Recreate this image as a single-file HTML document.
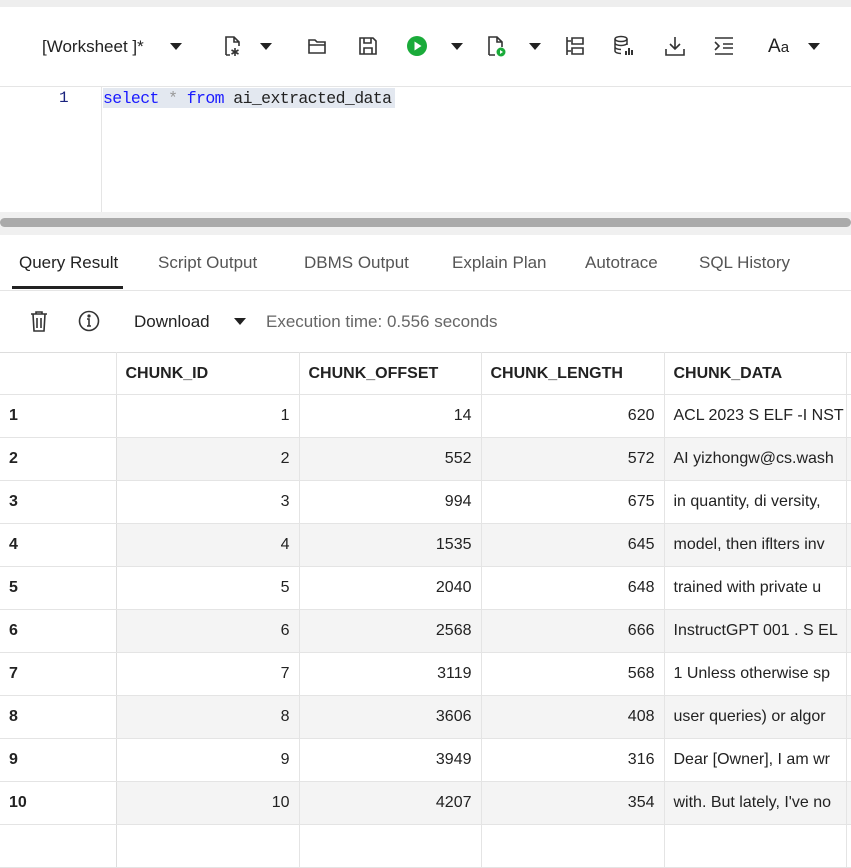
<!DOCTYPE html><html><head><style>
body{margin:0;width:851px;height:833px;overflow:hidden;font-family:"Liberation Sans",sans-serif;background:#fff;position:relative}
.a{position:absolute}
.ic{position:absolute;top:35px;width:22px;height:22px}
.tri{position:absolute;width:0;height:0;border-left:6px solid transparent;border-right:6px solid transparent;border-top:7px solid #222}
table{position:absolute;left:0;top:352px;border-collapse:collapse;font-size:16px;color:#222;table-layout:fixed;width:866px}
td,th{height:43px;padding:0 9px;border-right:1px solid #e4e4e4;border-bottom:1px solid #e4e4e4;box-sizing:border-box;white-space:nowrap;overflow:hidden}
th{text-align:left;font-weight:bold;border-top:1px solid #ddd;height:42px}
td.n{text-align:right}
tr.g td:not(:first-child){background:#f4f4f4}
td:first-child{font-weight:bold;border-right:1px solid #ddd}
</style></head><body>
<div class="a" style="left:0;top:0;width:851px;height:7px;background:#eee"></div>
<div class="a" style="left:0;top:86px;width:851px;height:1px;background:#e5e5e5"></div>
<div class="a" style="left:42px;top:37px;font-size:17px;color:#222">[Worksheet ]*</div>
<div class="tri" style="left:170px;top:43px"></div>
<svg class="ic" style="left:222px" viewBox="0 0 22 22" fill="none" stroke="#333" stroke-width="1.6"><path d="M4 20V2h8l5 5v4M12 2v5h5M4 20h4"/><path d="M13 13v8M9.5 15l7 4M16.5 15l-7 4"/></svg>
<div class="tri" style="left:260px;top:43px"></div>
<svg class="ic" style="left:307px" viewBox="0 0 22 22" fill="none" stroke="#333" stroke-width="1.6"><path d="M2 18V5h6l2 2h8v11zM2 10h16"/></svg>
<svg class="ic" style="left:357px" viewBox="0 0 22 22" fill="none" stroke="#333" stroke-width="1.6"><path d="M3 3h13l3 3v13H3zM7 3v5h7V3M7 19v-6h8v6"/></svg>
<svg class="ic" style="left:406px" viewBox="0 0 22 22"><circle cx="11" cy="11" r="10" fill="#1aab3a"/><path d="M8.5 6.5v9l7-4.5z" fill="#fff"/></svg>
<div class="tri" style="left:451px;top:43px"></div>
<svg class="ic" style="left:486px" viewBox="0 0 22 22" fill="none" stroke="#333" stroke-width="1.6"><path d="M3 20V2h8l5 5v5M11 2v5h5M3 20h6"/><circle cx="15" cy="17" r="4.5" fill="#1aab3a" stroke="none"/><path d="M14 15v4l3-2z" fill="#fff" stroke="none"/></svg>
<div class="tri" style="left:529px;top:43px"></div>
<svg class="ic" style="left:564px" viewBox="0 0 22 22" fill="none" stroke="#333" stroke-width="1.6"><path d="M3 2v18M3 6h4M3 16h4M8 3h11v6H8zM8 13h11v6H8z"/></svg>
<svg class="ic" style="left:613px" viewBox="0 0 22 22" fill="none" stroke="#333" stroke-width="1.5"><ellipse cx="8" cy="4" rx="6" ry="2.5"/><path d="M2 4v12c0 1.5 3 2.5 6 2.5M14 4v6M2 8c0 1.5 3 2.5 6 2.5s6-1 6-2.5M2 12c0 1.5 3 2.5 6 2.5"/><path d="M13 20v-4M16 20v-7M19 20v-5" stroke-width="2"/></svg>
<svg class="ic" style="left:664px" viewBox="0 0 22 22" fill="none" stroke="#333" stroke-width="1.6"><path d="M11 2v12M6 9l5 5 5-5M2 14v6h18v-6"/></svg>
<svg class="ic" style="left:713px" viewBox="0 0 22 22" fill="none" stroke="#333" stroke-width="1.6"><path d="M2 3h18M2 19h18M10 9h10M10 13h10M2 7l4 4-4 4"/></svg>
<div class="a" style="left:768px;top:36px;font-size:19px;color:#222">A<span style="font-size:15px">a</span></div>
<div class="tri" style="left:808px;top:43px"></div>
<div class="a" style="left:101px;top:87px;width:1px;height:125px;background:#e5e5e5"></div>
<div class="a" style="left:59px;top:89px;font:16px 'Liberation Mono',monospace;color:#1a237e">1</div>
<div class="a" style="left:103px;top:88px;height:20px;width:292px;background:#e3e8f0"></div>
<div class="a" style="left:103px;top:89px;font:16.5px 'Liberation Mono',monospace;color:#222;letter-spacing:-0.6px"><span style="color:#1a1aff">select</span> <span style="color:#999">*</span> <span style="color:#1a1aff">from</span> ai_extracted_data</div>
<div class="a" style="left:0;top:212px;width:851px;height:23px;background:#f0f0f0"></div>
<div class="a" style="left:0;top:218px;width:851px;height:9px;background:#aaa;border-radius:5px"></div>
<div class="a" style="left:0;top:253px;font-size:17px;color:#555;width:851px">
<span class="a" style="left:19px;color:#222">Query Result</span><span class="a" style="left:158px">Script Output</span><span class="a" style="left:304px">DBMS Output</span><span class="a" style="left:452px">Explain Plan</span><span class="a" style="left:585px">Autotrace</span><span class="a" style="left:699px">SQL History</span></div>
<div class="a" style="left:12px;top:286px;width:111px;height:3px;background:#222"></div>
<div class="a" style="left:0;top:290px;width:851px;height:1px;background:#e5e5e5"></div>
<svg class="a" style="left:29px;top:310px" width="20" height="22" viewBox="0 0 20 22" fill="none" stroke="#333" stroke-width="1.6"><path d="M2 4h16M7 4V2h6v2M4 4l1 17h10l1-17M8 8v10M12 8v10"/></svg>
<svg class="a" style="left:78px;top:310px" width="22" height="22" viewBox="0 0 22 22" fill="none" stroke="#333" stroke-width="1.6"><circle cx="11" cy="11" r="9.5"/><path d="M9 9h2v7M9 16h4"/><circle cx="11" cy="6" r=".8" fill="#333"/></svg>
<div class="a" style="left:134px;top:312px;font-size:17px;color:#222">Download</div>
<div class="tri" style="left:234px;top:318px"></div>
<div class="a" style="left:266px;top:312px;font-size:17px;color:#666">Execution time: 0.556 seconds</div>
<table>
<colgroup><col style="width:116px"><col style="width:183px"><col style="width:182px"><col style="width:183px"><col style="width:182px"><col style="width:20px"></colgroup>
<tr><th></th><th>CHUNK_ID</th><th>CHUNK_OFFSET</th><th>CHUNK_LENGTH</th><th>CHUNK_DATA</th><th></th></tr>
<tr><td>1</td><td class="n">1</td><td class="n">14</td><td class="n">620</td><td>ACL 2023 S ELF -I NST</td><td></td></tr>
<tr class="g"><td>2</td><td class="n">2</td><td class="n">552</td><td class="n">572</td><td>AI yizhongw@cs.wash</td><td></td></tr>
<tr><td>3</td><td class="n">3</td><td class="n">994</td><td class="n">675</td><td>in quantity, di versity,</td><td></td></tr>
<tr class="g"><td>4</td><td class="n">4</td><td class="n">1535</td><td class="n">645</td><td>model, then iflters inv</td><td></td></tr>
<tr><td>5</td><td class="n">5</td><td class="n">2040</td><td class="n">648</td><td>trained with private u</td><td></td></tr>
<tr class="g"><td>6</td><td class="n">6</td><td class="n">2568</td><td class="n">666</td><td>InstructGPT 001 . S EL</td><td></td></tr>
<tr><td>7</td><td class="n">7</td><td class="n">3119</td><td class="n">568</td><td>1 Unless otherwise sp</td><td></td></tr>
<tr class="g"><td>8</td><td class="n">8</td><td class="n">3606</td><td class="n">408</td><td>user queries) or algor</td><td></td></tr>
<tr><td>9</td><td class="n">9</td><td class="n">3949</td><td class="n">316</td><td>Dear [Owner], I am wr</td><td></td></tr>
<tr class="g"><td>10</td><td class="n">10</td><td class="n">4207</td><td class="n">354</td><td>with. But lately, I've no</td><td></td></tr>
<tr><td></td><td></td><td></td><td></td><td></td><td></td></tr>
</table>
</body></html>
